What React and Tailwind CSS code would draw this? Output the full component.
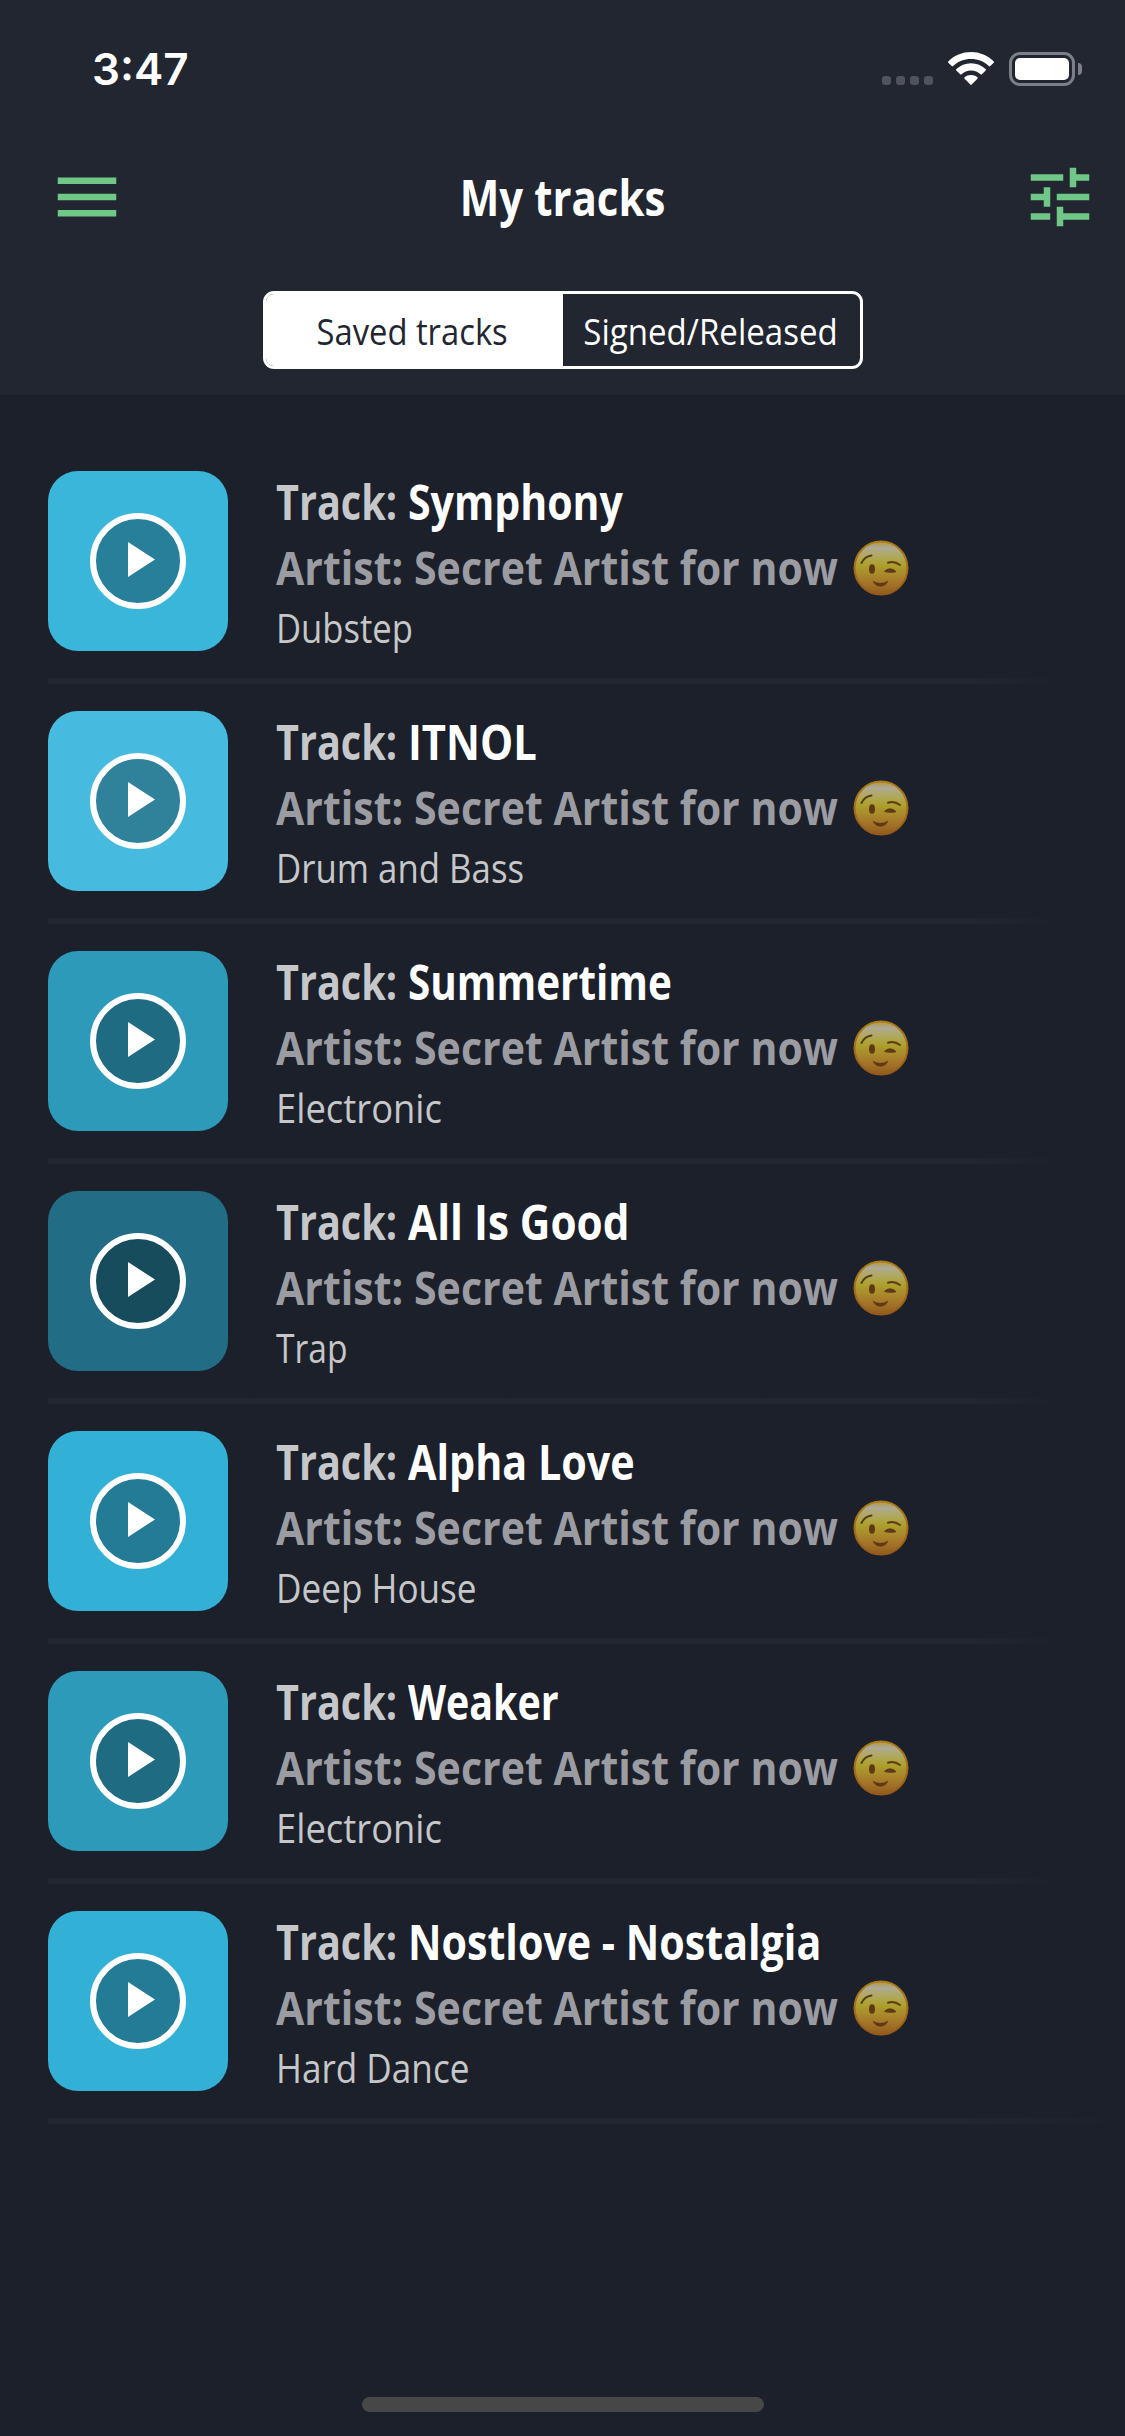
import React from 'react';
import { MdMenu, MdTune } from 'react-icons/md';

const tracks = [
  { title: 'Symphony', titleScale: 'scale-x-[0.855]', genre: 'Dubstep', genreScale: 'scale-x-[0.865]', cover: 'bg-[#3ab6db]' },
  { title: 'ITNOL', titleScale: 'scale-x-87', genre: 'Drum and Bass', genreScale: 'scale-x-[0.87]', cover: 'bg-[#46bbdf]' },
  { title: 'Summertime', titleScale: 'scale-x-[0.842]', genre: 'Electronic', genreScale: 'scale-x-[0.91]', cover: 'bg-[#2d9aba]' },
  { title: 'All Is Good', titleScale: 'scale-x-88', genre: 'Trap', genreScale: 'scale-x-84', cover: 'bg-[#226d85]' },
  { title: 'Alpha Love', titleScale: 'scale-x-86', genre: 'Deep House', genreScale: 'scale-x-[0.878]', cover: 'bg-[#33b0d6]' },
  { title: 'Weaker', titleScale: 'scale-x-82', genre: 'Electronic', genreScale: 'scale-x-[0.91]', cover: 'bg-[#2d9aba]' },
  { title: 'Nostlove - Nostalgia', titleScale: 'scale-x-[0.858]', genre: 'Hard Dance', genreScale: 'scale-x-[0.878]', cover: 'bg-[#33b0d6]' },
];

function StatusBar() {
  return (
    <div className="flex h-[138px] items-start justify-between pl-[92px] pr-[43px]">
      <div className="mt-[41px] font-[Inter] text-[44px] leading-[56px] font-semibold text-white">3:47</div>
      <div className="mt-[52px] flex items-start">
        <div className="mt-6 mr-[15px] flex gap-[5px]">
          {[0, 1, 2, 3].map((dot) => (
            <span key={dot} className="size-[9px] rounded-[3px] bg-[#50535d]" />
          ))}
        </div>
        <svg className="mr-[15px] h-[33px] w-[46px]" viewBox="0 0 46 33" fill="#fff">
          <path d="M23 0C31.700 0 39.700 3.400 45.600 9.200C46.100 9.700 46.100 10.200 45.700 10.700L42.300 14.100C41.900 14.500 41.300 14.500 40.900 14.100C36.200 9.600 29.900 7.100 23 7.100C16.100 7.100 9.800 9.600 5.100 14.100C4.700 14.500 4.100 14.500 3.700 14.100L0.300 10.700C-0.100 10.200 -0.100 9.700 0.400 9.200C6.300 3.400 14.300 0 23 0Z" />
          <path d="M23 11.200C28.700 11.200 33.800 13.400 37.600 17C38.100 17.500 38.100 18 37.700 18.500L33.900 22.200C33.500 22.600 32.900 22.600 32.500 22.200C30 19.900 26.700 18.400 23 18.400C19.300 18.400 16 19.900 13.500 22.200C13.100 22.600 12.500 22.600 12.100 22.200L8.300 18.500C7.900 18 7.900 17.500 8.400 17C12.200 13.400 17.300 11.200 23 11.200Z" />
          <path d="M23 22.900C25.500 22.900 27.700 23.700 29.400 25.200C29.900 25.700 29.900 26.200 29.400 26.700L23.700 32.500C23.300 33 22.700 33 22.300 32.500L16.600 26.700C16.100 26.200 16.100 25.700 16.600 25.200C18.300 23.700 20.500 22.900 23 22.900Z" />
        </svg>
        <div className="flex items-center">
          <div className="h-[34px] w-[66px] rounded-[11px] border-3 border-[#7c7f87] p-[3px]">
            <div className="h-full rounded-[5px] bg-white" />
          </div>
          <div className="ml-[3px] h-3 w-1 rounded-r-full bg-[#7c7f87]" />
        </div>
      </div>
    </div>
  );
}

function Header() {
  return (
    <header className="h-[396px] border-b border-[#191d26] bg-[#212631]">
      <StatusBar />
      <div className="flex h-[117px] items-center pr-[26px] pl-12">
        <MdMenu className="size-[78px] text-[#6fc788]" />
        <h1 className="flex flex-1 scale-x-84 justify-center pt-0.5 pr-[26px] text-[50px] font-bold text-white">
          My tracks
        </h1>
        <MdTune className="size-[78px] text-[#6fc788]" />
      </div>
      <div className="mx-auto mt-9 flex h-[78px] w-[600px] overflow-hidden rounded-[11px] border-3 border-white text-[36px]">
        <button className="w-[297px] bg-white pt-1 pr-[3px] text-[#212631]">
          <span className="inline-block scale-x-91">Saved tracks</span>
        </button>
        <button className="flex flex-1 items-center justify-center pt-1 whitespace-nowrap text-white">
          <span className="inline-block scale-x-[0.918]">Signed/Released</span>
        </button>
      </div>
    </header>
  );
}

function Wink() {
  return (
    <svg className="mt-px size-[56px] shrink-0" viewBox="0 0 56 56" fill="none" stroke="#5c3a14" strokeLinecap="round">
      <defs>
        <linearGradient id="face" x1="0" y1="0" x2="0" y2="1">
          <stop offset="0.02" stopColor="#b09a50" />
          <stop offset="0.12" stopColor="#aeaa94" />
          <stop offset="0.28" stopColor="#b0a95e" />
          <stop offset="0.45" stopColor="#ac9f2c" />
          <stop offset="0.75" stopColor="#a5792a" />
          <stop offset="1" stopColor="#925c1c" />
        </linearGradient>
        <linearGradient id="rim" x1="0" y1="0" x2="0" y2="1">
          <stop offset="0" stopColor="#b07d14" />
          <stop offset="1" stopColor="#96591a" />
        </linearGradient>
      </defs>
      <circle cx="28" cy="28" r="26.500" fill="url(#face)" stroke="url(#rim)" strokeWidth="2" />
      <ellipse cx="19" cy="29" rx="3" ry="4.800" fill="#5c3a14" stroke="none" />
      <path d="M8.500 23Q11.500 16.500 18.500 15.500" strokeWidth="2" />
      <path d="M35 22.700Q41 20.500 47 25" strokeWidth="2" />
      <path d="M32 31.300Q37 26.500 42.500 31.500Q37 32.800 32 31.300Z" fill="#5c3a14" strokeWidth="1.400" strokeLinejoin="round" />
      <path d="M19.500 40.500Q27.500 45.500 35.500 40.500Q33 46.500 27.500 46.500Q22 46.500 19.500 40.500Z" fill="#5c3a14" stroke="none" />
    </svg>
  );
}

function TrackRow({ track, isLast }) {
  return (
    <li className="pl-12">
      <div className="flex h-[180px]">
        <div className={`flex size-[180px] items-center justify-center rounded-[30px] ${track.cover}`}>
          <div className="flex size-24 items-center justify-center rounded-full border-6 border-white bg-black/30">
            <svg className="mb-[3px] ml-[7px] h-[35px] w-[27px]" viewBox="0 0 27 35" fill="#fff">
              <path d="M0 0L27 17.500L0 35Z" />
            </svg>
          </div>
        </div>
        <div className="ml-12 pt-px whitespace-nowrap">
          <div className="flex h-[59px] items-center text-[48px] font-bold text-[#c6c7c9]">
            <div className="w-[132px]">
              <span className="inline-block origin-left scale-x-[0.825]">Track:</span>
            </div>
            <span className={`origin-left text-white ${track.titleScale}`}>{track.title}</span>
          </div>
          <div className="flex h-[73px] items-center text-[47px] font-bold text-[#9b9ca2]">
            <div className="w-[577px]">
              <span className="inline-block origin-left scale-x-[0.874]">Artist: Secret Artist for now</span>
            </div>
            <Wink />
          </div>
          <div className="flex h-12 items-center text-[40px] text-[#c6c7c9]">
            <span className={`origin-left ${track.genreScale}`}>{track.genre}</span>
          </div>
        </div>
      </div>
      <div
        className={
          isLast
            ? 'my-[27px] h-1.5 bg-linear-to-r from-[#212631] from-85% to-[#1c202a]'
            : 'my-[27px] h-1.5 bg-linear-to-r from-[#212631] from-86% to-[#1c202a] to-94%'
        }
      />
    </li>
  );
}

function App() {
  return (
    <div className="flex h-[2436px] w-[1125px] flex-col bg-[#1c202a] font-['Open_Sans',sans-serif]">
      <Header />
      <ul className="flex-1 pt-[75px]">
        {tracks.map((track, index) => (
          <TrackRow key={track.title} track={track} isLast={index === tracks.length - 1} />
        ))}
      </ul>
      <div className="mx-auto mb-6 h-[15px] w-[402px] rounded-full bg-[#474747]" />
    </div>
  );
}

export default App;
